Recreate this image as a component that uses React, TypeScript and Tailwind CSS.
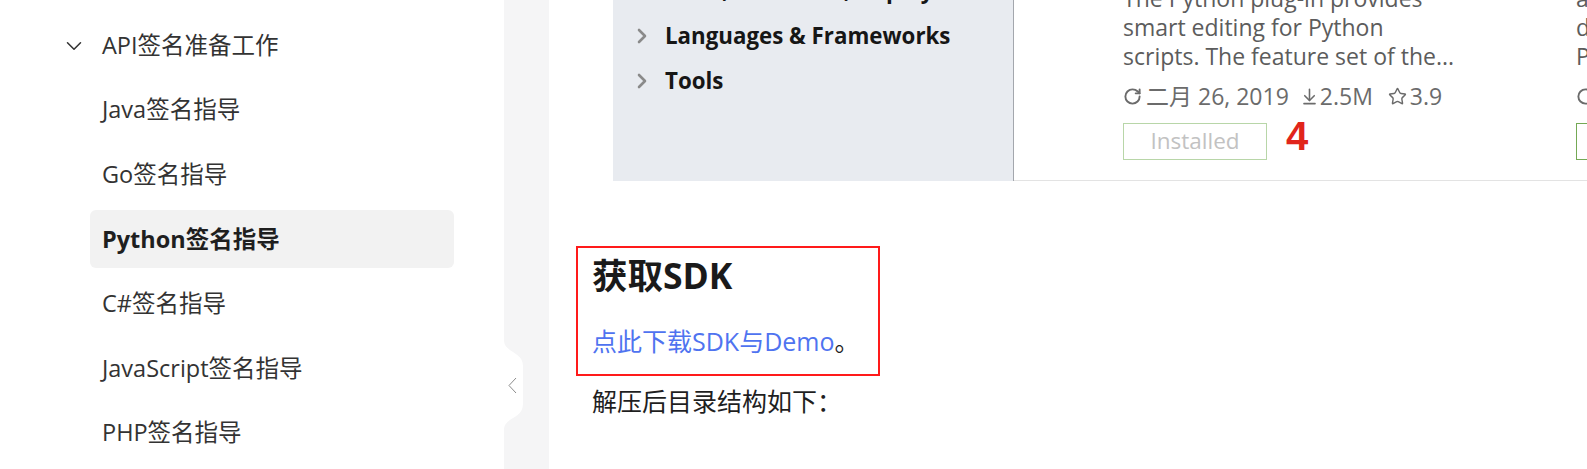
import React from "react";
import clsx from "clsx";
import { ChevronDown, ChevronRight, RotateCw, ArrowDownToLine, Star } from "lucide-react";

const guides = [
  "Java签名指导",
  "Go签名指导",
  "Python签名指导",
  "C#签名指导",
  "JavaScript签名指导",
  "PHP签名指导",
];
const current = "Python签名指导";

const settingsTree = ["Build, Execution, Deployment", "Languages & Frameworks", "Tools"];

type PluginCardProps = {
  lines: string[];
  updated: string;
  downloads: string;
  rating: string;
  buttonClass: string;
  badge?: string;
};

// one plugin tile from the IDE marketplace screenshot
const PluginCard: React.FC<PluginCardProps> = ({ lines, updated, downloads, rating, buttonClass, badge }) => (
  <div className="flex min-w-0 flex-col items-start">
    <div className="text-[23px] leading-[29px] text-[#5c5c5c]">
      {lines.map((l, i) => (
        <div key={i} className="whitespace-nowrap">
          {l}
        </div>
      ))}
    </div>
    <div className="mt-[11px] flex h-[29px] items-center whitespace-nowrap text-[23px] text-[#6b6b6b]">
      <RotateCw size={19} strokeWidth={2.4} className="shrink-0" />
      <span className="ml-[4px]">{updated}</span>
      <ArrowDownToLine size={19} strokeWidth={2} className="ml-[11px] shrink-0" />
      <span className="ml-[1px]">{downloads}</span>
      <Star size={19} strokeWidth={1.8} className="ml-[15px] shrink-0" />
      <span className="ml-[3px]">{rating}</span>
    </div>
    <div className="mt-[12px] flex items-start">
      <div
        className={clsx(
          "flex h-[37px] w-[144px] shrink-0 items-center justify-center border text-[22.5px] text-[#c2c2c2]",
          buttonClass
        )}
      >
        Installed
      </div>
      {badge && (
        <span className="-mt-[9px] ml-[19px] font-['Liberation_Sans',sans-serif] text-[40px] font-bold leading-[44px] text-[#e1251b]">
          {badge}
        </span>
      )}
    </div>
  </div>
);

export default function App() {
  return (
    <div className="flex h-[469px] w-full overflow-hidden bg-white font-['Open_Sans','Noto_Sans_CJK_SC',sans-serif]">
      {/* left doc tree */}
      <aside className="w-[504px] shrink-0 bg-white pl-[61px] pt-[16.5px]">
        <div className="flex h-[58px] items-center gap-[15px] text-[23.5px] text-[#333]">
          <ChevronDown size={26} strokeWidth={1.4} />
          <span>API签名准备工作</span>
        </div>
        <ul className="ml-[29px] mt-[6.6px] flex w-[364px] flex-col gap-[6.6px] text-[23.5px]">
          {guides.map((g) => (
            <li
              key={g}
              className={clsx(
                "flex h-[58px] items-center rounded-md px-3",
                g === current ? "bg-[#f2f2f2] font-bold text-[#1f1f1f]" : "text-[#333]"
              )}
            >
              {g}
            </li>
          ))}
        </ul>
      </aside>

      {/* collapse gutter */}
      <div className="relative w-[45px] shrink-0 bg-[#f5f5f6]">
        <svg className="absolute left-0 top-[340px]" width="20" height="90" viewBox="0 0 20 90">
          <path d="M0 0 C0 13 19 11 19 26 L19 64 C19 79 0 77 0 90 Z" fill="#ffffff" />
          <polyline points="12,38 5,45.5 12,53" fill="none" stroke="#8c8c8c" strokeWidth="1" />
        </svg>
      </div>

      {/* article */}
      <main className="min-w-0 flex-1 overflow-hidden pl-[43px]">
        <div className="ml-[21px] flex h-[181px] w-[1000px] overflow-hidden">
          <div className="w-[401px] shrink-0 border-r border-[#a3a7ad] bg-[#e8ebf0]">
            <div className="-mt-[32.75px] pl-[17px]">
              {settingsTree.map((t) => (
                <div key={t} className="flex h-[45.5px] items-center">
                  <ChevronRight size={24} strokeWidth={2.6} className="shrink-0 text-[#8a8a8a]" />
                  <span className="ml-[11px] whitespace-nowrap text-[22.3px] font-bold text-[#161616]">{t}</span>
                </div>
              ))}
            </div>
          </div>
          <div className="min-w-0 flex-1 border-b border-[#e3e3e3] bg-white pl-[109px]">
            <div className="-mt-[16.5px] grid w-[906px] grid-cols-[453px_453px]">
              <PluginCard
                lines={["The Python plug-in provides", "smart editing for Python", "scripts. The feature set of the..."]}
                updated="二月 26, 2019"
                downloads="2.5M"
                rating="3.9"
                buttonClass="border-[#b8d6a8]"
                badge="4"
              />
              <PluginCard
                lines={["and code insight", "debugging support", "Python interpreters"]}
                updated="一月 15, 2019"
                downloads="1.1M"
                rating="4.2"
                buttonClass="border-[#74a955]"
              />
            </div>
          </div>
        </div>

        <section className="-ml-[16px] mt-[65px] w-[304px] border-2 border-[#ff1a1a] px-[14px] pb-[15px] pt-[7px]">
          <h2 className="text-[35.5px] font-bold leading-[40px] text-[#1a1a1a]">获取SDK</h2>
          <p className="mt-[28px] text-[25px] leading-[36px] text-[#1f1f1f]">
            <a className="text-[#4f73f0]">点此下载SDK与Demo</a>。
          </p>
        </section>
        <p className="mt-[7px] text-[25px] leading-[36px] text-[#1f1f1f]">解压后目录结构如下：</p>
      </main>
    </div>
  );
}
